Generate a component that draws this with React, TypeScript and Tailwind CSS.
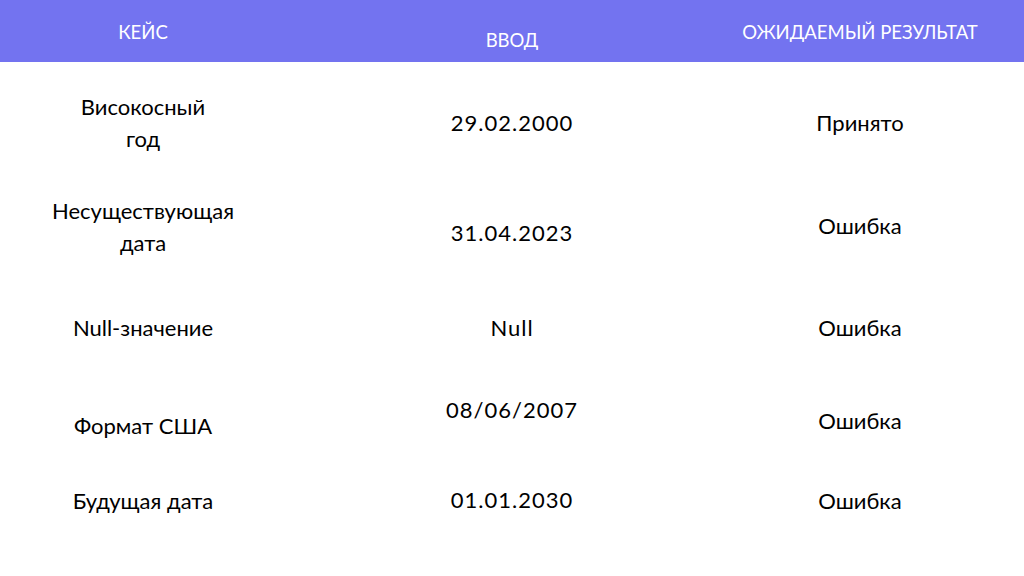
import React from 'react'

type Row = {
    h: string
    cells: { text: React.ReactNode; pt: string }[]
}

const rows: Row[] = [
    {
        h: 'h-[110px]',
        cells: [
            { text: <>Високосный<br />год</>, pt: 'pt-[29px]' },
            { text: '29.02.2000', pt: 'pt-[45px]' },
            { text: 'Принято', pt: 'pt-[45px]' }
        ]
    },
    {
        h: 'h-[110px]',
        cells: [
            { text: <>Несуществующая<br />дата</>, pt: 'pt-[23px]' },
            { text: '31.04.2023', pt: 'pt-[45px]' },
            { text: 'Ошибка', pt: 'pt-[38px]' }
        ]
    },
    {
        h: 'h-[90px]',
        cells: [
            { text: 'Null-значение', pt: 'pt-[30px]' },
            { text: 'Null', pt: 'pt-[30px]' },
            { text: 'Ошибка', pt: 'pt-[30px]' }
        ]
    },
    {
        h: 'h-[95px]',
        cells: [
            { text: 'Формат США', pt: 'pt-[38px]' },
            { text: '08/06/2007', pt: 'pt-[22px]' },
            { text: 'Ошибка', pt: 'pt-[33px]' }
        ]
    },
    {
        h: 'h-[109px]',
        cells: [
            { text: 'Будущая дата', pt: 'pt-[18px]' },
            { text: '01.01.2030', pt: 'pt-[17px]' },
            { text: 'Ошибка', pt: 'pt-[18px]' }
        ]
    }
]

const cols = 'grid grid-cols-[286px_452px_244px]'

const App = () => {
    return (
        <div className="w-[1024px] h-[576px] bg-white overflow-hidden font-['Lato','Noto_Sans',sans-serif] text-black">
            {/* header */}
            <div className={`${cols} h-[62px] bg-[#7373f0] text-white text-[18.5px] leading-[32px]`}>
                <div className="text-center pt-[16px]">КЕЙС</div>
                <div className="text-center pt-[24px]">ВВОД</div>
                <div className="text-center pt-[16px]">ОЖИДАЕМЫЙ РЕЗУЛЬТАТ</div>
            </div>

            {rows.map((row, i) => (
                <div key={i} className={`${cols} ${row.h} text-[22px] leading-[32px]`}>
                    {row.cells.map((c, j) => (
                        <div key={j} className={`text-center ${c.pt} ${j === 1 ? 'tracking-[1px]' : ''}`}>
                            {c.text}
                        </div>
                    ))}
                </div>
            ))}
        </div>
    )
}

export default App
